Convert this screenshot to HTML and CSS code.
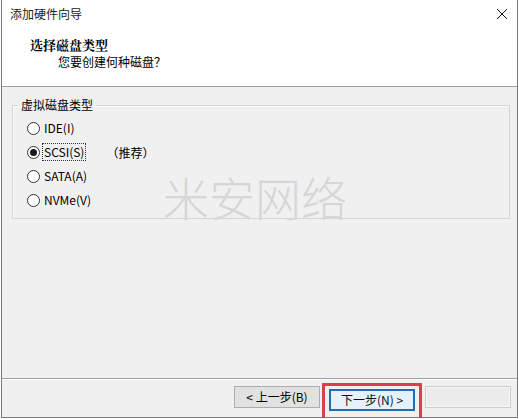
FILE: index.html
```html
<!DOCTYPE html>
<html lang="zh-CN">
<head>
<meta charset="utf-8">
<title>添加硬件向导</title>
<link rel="stylesheet" href="styles.css">
</head>
<body>
<div class="window">
  <div class="header">
    <div class="titlebar">
      <span class="title">添加硬件向导</span>
      <svg class="close" width="12" height="12" viewBox="0 0 12 12"><path d="M1 1 L11 11 M11 1 L1 11" stroke="#111" stroke-width="1" fill="none"/></svg>
    </div>
    <div class="head-title">选择磁盘类型</div>
    <div class="head-sub">您要创建何种磁盘？</div>
  </div>
  <div class="content">
    <fieldset class="group">
      <legend class="legend">虚拟磁盘类型</legend>
      <div class="row"><span class="radio"></span><span class="label">IDE(I)</span></div>
      <div class="row"><span class="radio checked"></span><span class="label focus">SCSI(S)</span><span class="hint">（推荐）</span></div>
      <div class="row"><span class="radio"></span><span class="label">SATA(A)</span></div>
      <div class="row"><span class="radio"></span><span class="label">NVMe(V)</span></div>
    </fieldset>
    <div class="watermark">米安网络</div>
  </div>
  <div class="footer">
    <button class="btn prev">&lt; 上一步(B)</button>
    <span class="highlight"><button class="btn next">下一步(N) &gt;</button></span>
    <button class="btn cancel"></button>
  </div>
</div>
</body>
</html>
```
FILE: styles.css
```css
html, body {
  margin: 0;
  padding: 0;
  background: #ffffff;
}
body {
  font-family: "Noto Sans CJK SC", "Microsoft YaHei", sans-serif;
  font-size: 12px;
  color: #000;
}
.window {
  position: relative;
  margin-left: 1px;
  width: 517px;
  height: 418px;
  box-sizing: border-box;
  border: 1px solid #7a7a7a;
  border-top: none;
  display: flex;
  flex-direction: column;
  background: #f0f0f0;
}
.header {
  background: #ffffff;
  height: 86px;
  border-bottom: 1px solid #a0a0a0;
  box-sizing: content-box;
}
.titlebar {
  height: 28px;
  display: flex;
  align-items: center;
  justify-content: space-between;
  padding: 0 9px 0 8px;
}
.title {
  font-size: 12px;
  line-height: 16px;
  color: #222;
}
.close {
  display: block;
}
.head-title {
  margin-left: 28px;
  margin-top: 8px;
  font-size: 13px;
  font-weight: bold;
  line-height: 17px;
  font-family: "Noto Serif CJK SC", "Noto Sans CJK SC", serif;
}
.head-sub {
  margin-left: 56px;
  margin-top: 1px;
  font-size: 12px;
  line-height: 16px;
}
.content {
  position: relative;
  flex: 1;
  background: #f0f0f0;
  border-bottom: 1px solid #a0a0a0;
  box-shadow: 0 1px 0 #ffffff;
  padding: 10px 7px 0 10px;
}
.group {
  margin: 0;
  padding: 3px 10px 6px 14px;
  border: 1px solid #d5d5d5;
  box-shadow: inset 1px 1px 0 #fbfbfb;
  min-width: 0;
}
.legend {
  padding: 0 3px;
  margin-left: -9px;
  font-size: 12px;
  line-height: 16px;
}
.row {
  height: 24px;
  display: flex;
  align-items: center;
}
.radio {
  width: 11px;
  height: 11px;
  border: 1px solid #333;
  border-radius: 50%;
  background: #fff;
  display: flex;
  align-items: center;
  justify-content: center;
  flex: none;
}
.radio.checked::after {
  content: "";
  width: 7px;
  height: 7px;
  border-radius: 50%;
  background: #1a1a1a;
}
.label {
  margin-left: 2px;
  padding: 0 1px;
  line-height: 16px;
  border: 1px dotted transparent;
}
.label.focus {
  border-color: #333;
}
.hint {
  margin-left: 20px;
}
.watermark {
  position: absolute;
  left: 161px;
  top: 84px;
  font-size: 46px;
  line-height: 50px;
  font-weight: 300;
  color: #d6d6d6;
  white-space: nowrap;
  pointer-events: none;
}
.footer {
  height: 38px;
  display: flex;
  align-items: flex-start;
  justify-content: flex-end;
  padding: 7px 6px 0 0;
  box-sizing: border-box;
}
.btn {
  width: 86px;
  height: 22px;
  margin: 0;
  padding: 0;
  font-family: "Noto Sans CJK SC", "Microsoft YaHei", sans-serif;
  font-size: 12px;
  line-height: 18px;
  color: #000;
  background: #e1e1e1;
  border: 1px solid #adadad;
  box-sizing: border-box;
}
.prev {
  margin-right: 2px;
}
.highlight {
  display: flex;
  margin-top: -3px;
  height: 38px;
  padding: 3px 4px 0 4px;
  border: 3px solid #d8414a;
  border-bottom: none;
  box-sizing: border-box;
}
.next {
  background: #e5f1fb;
  border: 2px solid #1a6fb5;
  color: #111;
}
.cancel {
  margin-left: 3px;
  background: #ececec;
  border-color: #cdcdcd;
  box-shadow: inset 0 0 0 1px #f6f6f6;
}
```
